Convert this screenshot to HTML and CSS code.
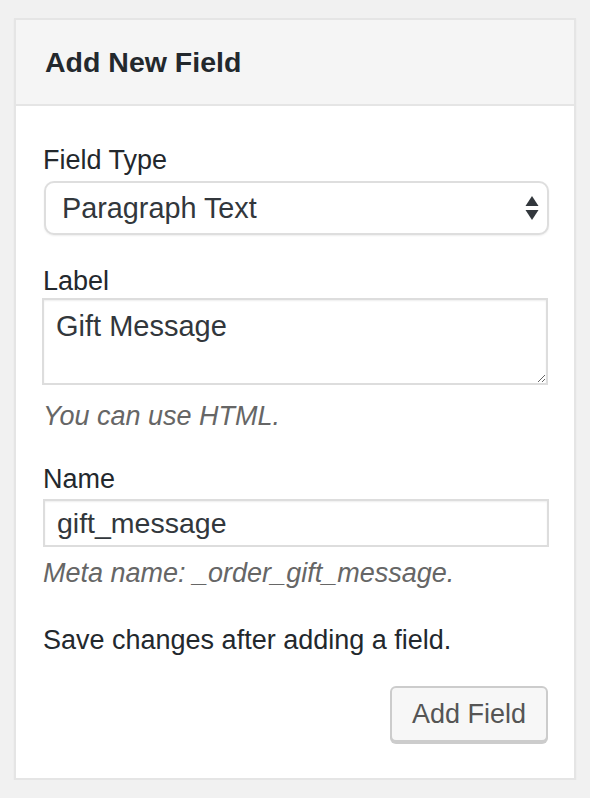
FILE: index.html
```html
<!DOCTYPE html>
<html>
<head>
<meta charset="utf-8">
<link rel="stylesheet" href="styles.css">
</head>
<body>
<div class="postbox">
  <h2 class="hndle">Add New Field</h2>
  <div class="inside">
    <label class="lbl lbl-first">Field Type</label>
    <div class="select-wrap">
      <select class="select">
        <option>Paragraph Text</option>
      </select>
      <svg class="arrows" width="14" height="26" viewBox="0 0 14 26">
        <path d="M7 1 L13.5 11 L0.5 11 Z" fill="#32373c"/>
        <path d="M7 25 L13.5 15 L0.5 15 Z" fill="#32373c"/>
      </svg>
    </div>
    <label class="lbl">Label</label>
    <textarea class="textarea">Gift Message</textarea>
    <p class="desc desc-html">You can use HTML.</p>
    <label class="lbl lbl-name">Name</label>
    <input class="input" type="text" value="gift_message">
    <p class="desc desc-meta">Meta name: _order_gift_message.</p>
    <p class="note">Save changes after adding a field.</p>
    <div class="actions">
      <button class="button">Add Field</button>
    </div>
  </div>
</div>
</body>
</html>
```
FILE: styles.css
```css
html, body {
  margin: 0;
  padding: 0;
  background: #f1f1f1;
}
body {
  padding: 18px 14px 0 14px;
  font-family: "Liberation Sans", Arial, sans-serif;
  color: #23282d;
}
.postbox {
  width: 558px;
  border: 2px solid #e5e5e5;
  background: #fff;
  box-shadow: 0 1px 2px rgba(0,0,0,0.04);
}
.hndle {
  margin: 0;
  height: 84px;
  line-height: 84px;
  padding: 0 29px;
  font-size: 28.5px;
  font-weight: bold;
  background: #f5f5f5;
  border-bottom: 2px solid #e5e5e5;
  color: #23282d;
}
.inside {
  padding: 36px 25px 36px 27px;
}
.lbl {
  display: block;
  font-size: 27px;
  line-height: 36px;
  color: #23282d;
  margin-top: 28px;
}
.lbl-first {
  margin-top: 0;
}
.lbl-name {
  margin-top: 27px;
}
.select-wrap {
  position: relative;
  margin-top: 3px;
  margin-left: 1px;
}
.select {
  appearance: none;
  -webkit-appearance: none;
  display: block;
  width: 505px;
  height: 54px;
  box-sizing: border-box;
  border: 2px solid #dedede;
  border-radius: 10px;
  background: #fff;
  box-shadow: 0 1px 2px rgba(0,0,0,0.07);
  padding: 0 0 0 16px;
  font-family: "Liberation Sans", Arial, sans-serif;
  font-size: 28.8px;
  color: #32373c;
  outline: none;
}
.arrows {
  position: absolute;
  right: 10px;
  top: 14px;
}
.textarea {
  display: block;
  box-sizing: border-box;
  width: 506px;
  height: 87px;
  margin: -1px 0 0 -1px;
  border: 2px solid #ddd;
  box-shadow: inset 0 1px 2px rgba(0,0,0,0.07);
  padding: 8px 12px;
  font-family: "Liberation Sans", Arial, sans-serif;
  font-size: 29px;
  line-height: 36px;
  color: #32373c;
  outline: none;
  resize: vertical;
}
.desc {
  margin: 0;
  font-size: 27px;
  line-height: 36px;
  font-style: italic;
  color: #666;
}
.desc-html {
  margin-top: 13px;
}
.input {
  display: block;
  box-sizing: border-box;
  width: 506px;
  height: 48px;
  margin-top: 2px;
  border: 2px solid #ddd;
  box-shadow: inset 0 1px 2px rgba(0,0,0,0.07);
  padding: 0 12px;
  font-family: "Liberation Sans", Arial, sans-serif;
  font-size: 28.5px;
  color: #32373c;
  outline: none;
}
.desc-meta {
  margin-top: 8px;
}
.note {
  margin: 31px 0 0 0;
  font-size: 27px;
  line-height: 36px;
  color: #23282d;
}
.actions {
  display: flex;
  justify-content: flex-end;
  margin-top: 28px;
  padding-right: 1px;
}
.button {
  height: 56px;
  padding: 0 20px;
  border: 2px solid #ccc;
  border-radius: 6px;
  background: #f7f7f7;
  box-shadow: 0 2px 0 #ccc;
  font-family: "Liberation Sans", Arial, sans-serif;
  font-size: 27px;
  color: #555;
  cursor: pointer;
}
```
